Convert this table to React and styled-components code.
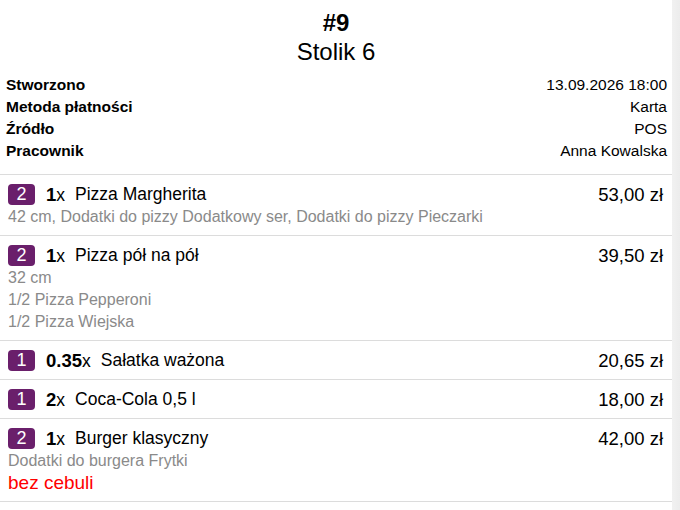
import styled, { createGlobalStyle } from "styled-components";

const Global = createGlobalStyle`
  html, body {
    margin: 0;
    padding: 0;
    background: #fff;
    font-family: "Liberation Sans", Arial, sans-serif;
    color: #000;
  }
`;

const Page = styled.div`
  display: flex;
  width: 680px;
  height: 510px;
  overflow: hidden;
`;

const Ticket = styled.div`
  flex: 1;
  display: flex;
  flex-direction: column;
`;

const Edge = styled.div`
  width: 8px;
  background: linear-gradient(to right, #f1f1f1, #ececec);
`;

const Header = styled.div`
  display: flex;
  flex-direction: column;
  align-items: center;
  padding-top: 8px;
`;

const OrderNo = styled.div`
  font-size: 24px;
  font-weight: bold;
  line-height: 29px;
`;

const TableName = styled.div`
  font-size: 24px;
  line-height: 30px;
`;

const Meta = styled.div`
  display: flex;
  flex-direction: column;
  padding: 7px 5px 12px 6px;
  border-bottom: 1px solid #dcdcdc;
`;

const MetaRow = styled.div`
  display: flex;
  justify-content: space-between;
  font-size: 15.5px;
  line-height: 22px;
`;

const MetaLabel = styled.span`
  font-weight: bold;
`;

const Item = styled.div`
  display: flex;
  justify-content: space-between;
  padding: 8px 8px 7px 8px;
  border-bottom: 1px solid #dcdcdc;
`;

const ItemMain = styled.div`
  display: flex;
  flex-direction: column;
`;

const ItemHead = styled.div`
  display: flex;
  align-items: center;
  height: 23px;
  font-size: 17.5px;
`;

const Badge = styled.span`
  display: inline-flex;
  align-items: center;
  justify-content: center;
  width: 27px;
  height: 21px;
  border-radius: 4px;
  background: #6a1f6b;
  color: #fff;
  font-size: 18px;
  margin-right: 11px;
`;

const Qty = styled.span`
  margin-right: 10px;
  b {
    font-weight: bold;
    font-size: 18.5px;
  }
`;

const Detail = styled.div`
  font-size: ${(p) => (p.$note ? "19px" : "16px")};
  line-height: 22px;
  color: ${(p) => (p.$note ? "#ff0000" : "#8a8a8a")};
`;

const Price = styled.div`
  font-size: 18.5px;
  line-height: 23px;
  padding-right: 1px;
`;

const meta = [
  ["Stworzono", "13.09.2026 18:00"],
  ["Metoda płatności", "Karta"],
  ["Źródło", "POS"],
  ["Pracownik", "Anna Kowalska"],
];

const items = [
  {
    course: 2,
    qty: "1",
    name: "Pizza Margherita",
    price: "53,00 zł",
    details: ["42 cm, Dodatki do pizzy Dodatkowy ser, Dodatki do pizzy Pieczarki"],
  },
  {
    course: 2,
    qty: "1",
    name: "Pizza pół na pół",
    price: "39,50 zł",
    details: ["32 cm", "1/2 Pizza Pepperoni", "1/2 Pizza Wiejska"],
  },
  { course: 1, qty: "0.35", name: "Sałatka ważona", price: "20,65 zł", details: [] },
  { course: 1, qty: "2", name: "Coca-Cola 0,5 l", price: "18,00 zł", details: [] },
  {
    course: 2,
    qty: "1",
    name: "Burger klasyczny",
    price: "42,00 zł",
    details: ["Dodatki do burgera Frytki"],
    note: "bez cebuli",
  },
];

export default function App() {
  return (
    <Page>
      <Global />
      <Ticket>
        <Header>
          <OrderNo>#9</OrderNo>
          <TableName>Stolik 6</TableName>
        </Header>
        <Meta>
          {meta.map(([label, value]) => (
            <MetaRow key={label}>
              <MetaLabel>{label}</MetaLabel>
              <span>{value}</span>
            </MetaRow>
          ))}
        </Meta>
        {items.map((item) => (
          <Item key={item.name}>
            <ItemMain>
              <ItemHead>
                <Badge>{item.course}</Badge>
                <Qty>
                  <b>{item.qty}</b>x
                </Qty>
                <span>{item.name}</span>
              </ItemHead>
              {item.details.map((d) => (
                <Detail key={d}>{d}</Detail>
              ))}
              {item.note && <Detail $note>{item.note}</Detail>}
            </ItemMain>
            <Price>{item.price}</Price>
          </Item>
        ))}
      </Ticket>
      <Edge />
    </Page>
  );
}
